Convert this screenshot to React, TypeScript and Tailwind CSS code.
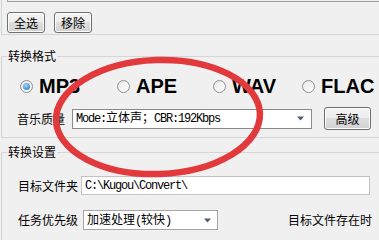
import React from "react";

const cjk = "font-['Noto_Sans_CJK_SC',sans-serif]";
const mono = "font-['Liberation_Mono','Noto_Sans_CJK_SC',monospace] text-[12px] tracking-[-1.2px]";

function WinButton({ label, className = "" }: { label: string; className?: string }) {
    return (
        <button
            className={`flex items-center justify-center rounded-[3px] border border-[#707070] bg-[linear-gradient(#f4f4f4,#ececec_50%,#dedede_50%,#d2d2d2)] text-[12px] leading-none text-black shadow-[inset_0_0_0_1px_#fcfcfc] ${className}`}
        >
            {label}
        </button>
    );
}

function Radio({ label, checked = false, className = "" }: { label: string; checked?: boolean; className?: string }) {
    return (
        <div className={`flex items-center gap-[6px] ${className}`}>
            <span className="flex h-[13px] w-[13px] items-center justify-center rounded-full border border-[#8e8f8f] bg-[linear-gradient(135deg,#e6e6e6,#ffffff)]">
                {checked && (
                    <span className="h-[7px] w-[7px] rounded-full bg-[radial-gradient(circle_at_40%_35%,#a9d3f5,#3f8ed4_70%)]" />
                )}
            </span>
            <span className="font-['Liberation_Sans',Arial,sans-serif] text-[20px] font-bold leading-[20px]">{label}</span>
        </div>
    );
}

function DropArrow() {
    return (
        <svg width="9" height="5" viewBox="0 0 9 5" className="shrink-0">
            <path d="M1 0.5h7L4.5 4.5z" fill="#4a5d74" />
        </svg>
    );
}

export default function App() {
    return (
        <div className={`relative h-[240px] w-[379px] overflow-hidden bg-[#f0f0f0] text-[12px] text-black ${cjk}`}>
            {/* file list group */}
            <fieldset className="ml-px h-[35px] w-[420px] border-b border-l border-[#d5d5d5]">
                <div className="ml-[5px] h-[2px] border-b border-l border-[#a0a0a0]" />
                <div className="ml-[5px] mt-[10px] flex gap-[9px]">
                    <WinButton label="全选" className="h-[21px] w-[38px]" />
                    <WinButton label="移除" className="h-[21px] w-[38px]" />
                </div>
            </fieldset>

            {/* 转换格式 */}
            <fieldset className="ml-px mt-[14px] w-[420px] border-b border-l border-t border-[#d5d5d5] pb-[7px]">
                <legend className="ml-[5px] h-[14px] px-px leading-[14px]">转换格式</legend>
                <div className="mt-[13px] flex h-[20px] items-center pl-[18px]">
                    <Radio label="MP3" checked className="w-[97px]" />
                    <Radio label="APE" className="w-[96px]" />
                    <Radio label="WAV" className="w-[89px]" />
                    <Radio label="FLAC" />
                </div>
                <div className="mt-[11px] flex h-[23px] items-center pl-[15px]">
                    <span className="w-[50px] leading-none">音乐质量</span>
                    <div className="ml-[5px] flex h-[20px] w-[240px] items-center justify-between border border-[#8a8a8a] bg-white pl-[3px] pr-[6px]">
                        <span className={`${mono} leading-none`}>
                            Mode:<span className="tracking-normal">立体声；</span>CBR:192Kbps
                        </span>
                        <DropArrow />
                    </div>
                    <WinButton label="高级" className="ml-[12px] h-[23px] w-[47px]" />
                </div>
            </fieldset>

            {/* 转换设置 */}
            <fieldset className="ml-px mt-[7px] h-[200px] w-[420px] border-l border-t border-[#d5d5d5]">
                <legend className="ml-[5px] h-[14px] px-px leading-[14px]">转换设置</legend>
                <div className="mt-[17px] flex h-[19px] items-center pl-[16px]">
                    <span className="w-[60px] leading-none">目标文件夹</span>
                    <div className="ml-[3px] flex h-[19px] w-[289px] items-center border border-[#c3c3c3] bg-white pl-[3px]">
                        <span className={`${mono} leading-none`}>C:\Kugou\Convert\</span>
                    </div>
                </div>
                <div className="mt-[15px] flex h-[20px] items-center pl-[16px]">
                    <span className="w-[60px] leading-none">任务优先级</span>
                    <div className="ml-[5px] flex h-[20px] w-[135px] items-center justify-between border border-[#a5a5a5] bg-white pl-[3px] pr-[5px]">
                        <span className="text-[12px] leading-none">
                            加速处理<span className={mono}>(</span>较快<span className={mono}>)</span>
                        </span>
                        <DropArrow />
                    </div>
                    <span className="ml-[70px] leading-none">目标文件存在时</span>
                </div>
            </fieldset>

            {/* red hand-drawn mark */}
            <svg className="pointer-events-none absolute left-0 top-0" width="379" height="240" viewBox="0 0 379 240">
                <ellipse cx="158" cy="117" rx="102" ry="57" fill="none" stroke="#e23a3c" strokeWidth="6.5" transform="rotate(-2 158 117)" />
            </svg>
        </div>
    );
}
